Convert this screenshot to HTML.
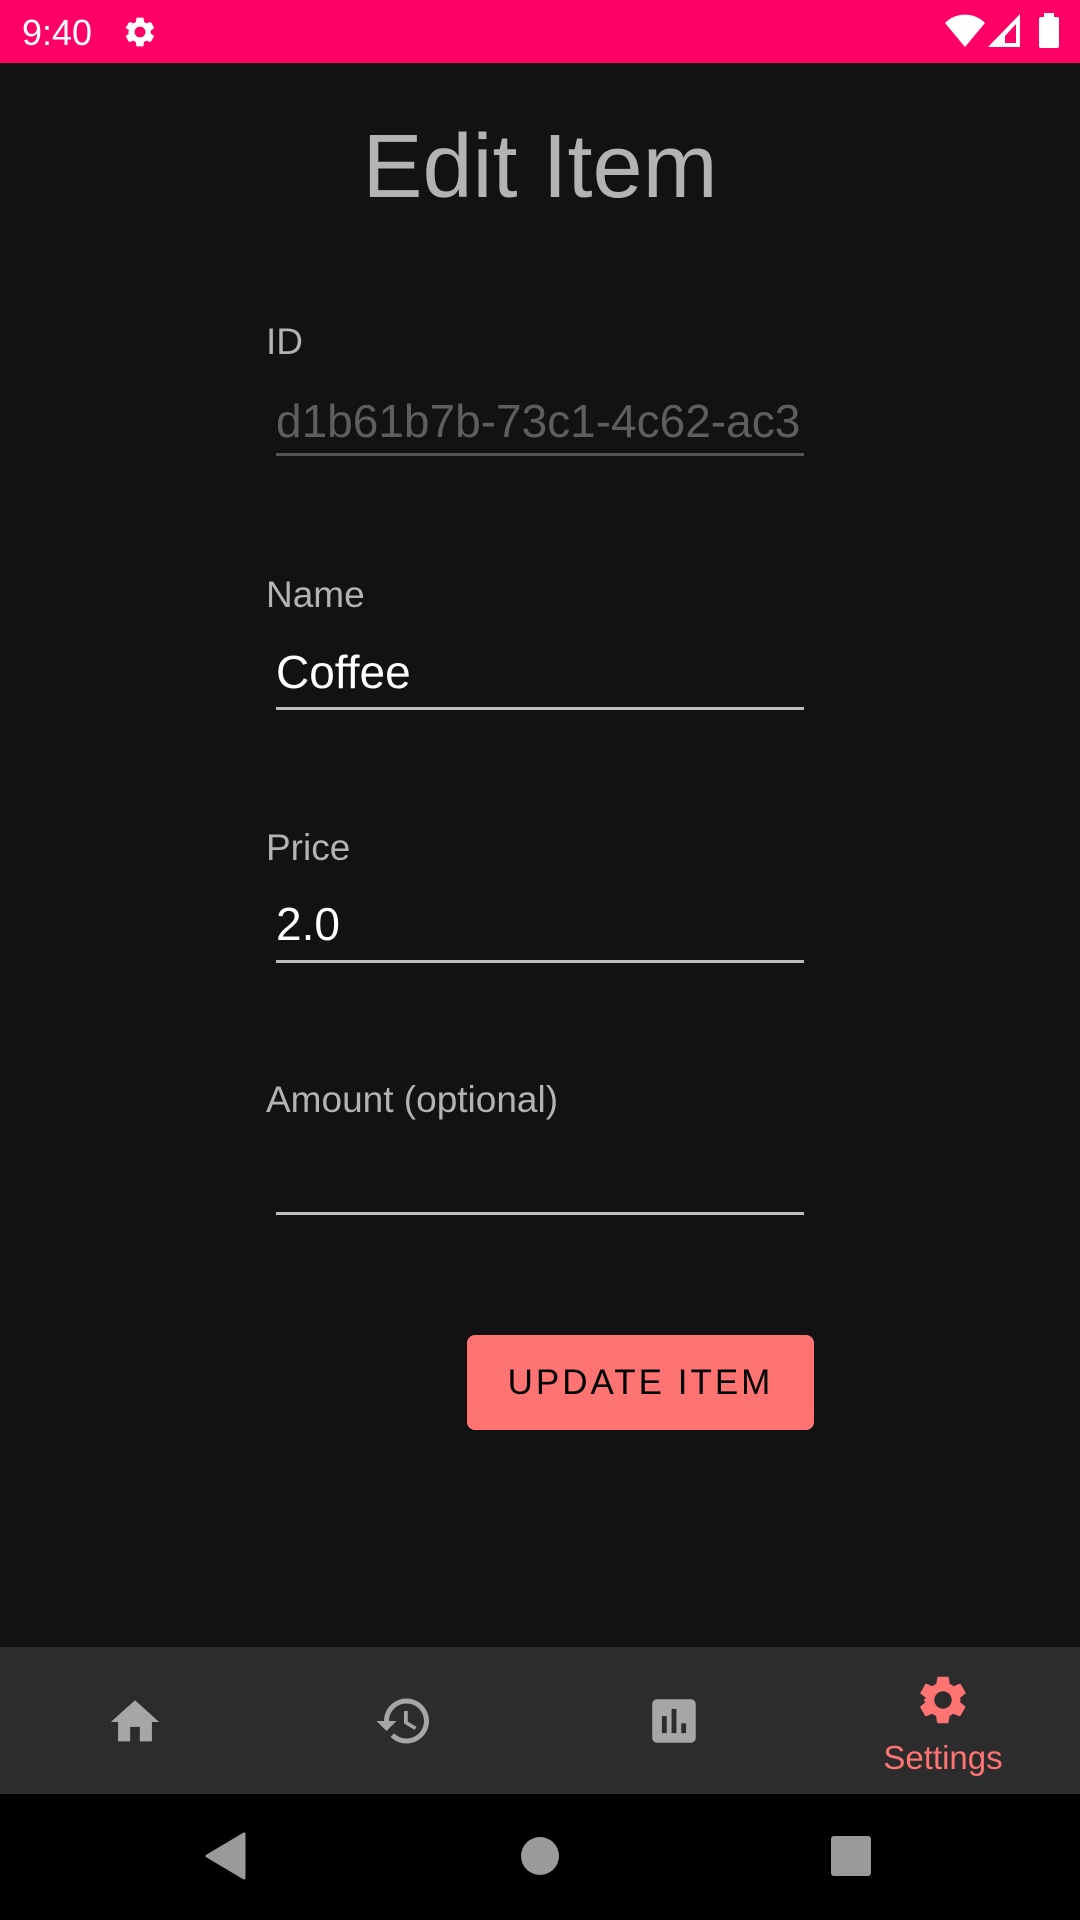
<!DOCTYPE html>
<html><head><meta charset="utf-8"><style>
*{margin:0;padding:0;box-sizing:border-box}
body{width:1080px;height:1920px;background:#121212;position:relative;overflow:hidden;font-family:"Liberation Sans",sans-serif}
.a{position:absolute;line-height:1;white-space:nowrap}
.lab{color:#b3b3b3;font-size:37px;left:266px}
.val{color:#fff;font-size:46px;left:276px}
.line{position:absolute;left:276px;width:528px;height:3px;background:#bdbdbd}
</style></head><body>
<div style="position:absolute;left:0;top:0;width:1080px;height:63px;background:#ff0066"></div>
<div class="a" style="left:22px;top:15px;font-size:36px;color:#fff">9:40</div>
<svg style="position:absolute;left:122px;top:14px" width="36" height="36" viewBox="0 0 24 24"><path fill="#fff" d="M19.14 12.94c.04-.3.06-.61.06-.94 0-.32-.02-.64-.07-.94l2.030-1.58a.49.49 0 0 0 .12-.61l-1.92-3.32a.49.49 0 0 0-.59-.22l-2.39.96c-.5-.38-1.03-.7-1.62-.94l-.36-2.54a.48.48 0 0 0-.48-.41h-3.840c-.24 0-.43.17-.47.41l-.36 2.540c-.59.24-1.13.57-1.62.94l-2.39-.96a.49.49 0 0 0-.59.22L2.74 8.87c-.12.21-.8.47.12.61l2.03 1.58c-.5.3-.8.63-.8.94s.2.64.7.94l-2.03 1.58a.49.49 0 0 0-.12.61l1.92 3.32c.12.22.37.29.59.22l2.39-.96c.5.38 1.03.7 1.62.94l.36 2.54c.5.24.24.41.48.41h3.84c.24 0 .44-.17.47-.41l.36-2.54c.59-.24 1.13-.56 1.62-.94l2.39.96c.22.08.47 0 .59-.22l1.92-3.32c.12-.22.07-.47-.12-.61l-2.01-1.58zM12 15.6A3.6 3.6 0 1 1 12 8.4a3.6 3.6 0 0 1 0 7.2z"/></svg>
<svg style="position:absolute;left:944px;top:14px" width="42" height="34" viewBox="0 0 42 34"><path fill="#fff" d="M21 33 L1 9 A28 28 0 0 1 41 9 Z"/></svg>
<svg style="position:absolute;left:988px;top:14px" width="33" height="33" viewBox="0 0 33 33"><path fill="#fff" d="M32 0 V33 H0 Z M28 10 L17 22 V29 H28 Z" fill-rule="evenodd"/></svg>
<div style="position:absolute;left:1039px;top:17px;width:20px;height:31px;background:#fff;border-radius:2px"></div>
<div style="position:absolute;left:1044px;top:13px;width:10px;height:5px;background:#fff"></div>

<div class="a" style="left:0;width:1080px;text-align:center;top:122px;font-size:90px;color:#b3b3b3">Edit Item</div>

<div class="a lab" style="top:323px">ID</div>
<div class="a" style="left:276px;top:398px;font-size:46px;color:#5e5e5e">d1b61b7b-73c1-4c62-ac3</div>
<div class="line" style="top:453px;background:#555"></div>

<div class="a lab" style="top:576px">Name</div>
<div class="a val" style="top:649px">Coffee</div>
<div class="line" style="top:707px"></div>

<div class="a lab" style="top:829px">Price</div>
<div class="a val" style="top:901px">2.0</div>
<div class="line" style="top:960px"></div>

<div class="a lab" style="top:1081px">Amount (optional)</div>
<div class="line" style="top:1212px"></div>

<div style="position:absolute;left:467px;top:1335px;width:347px;height:95px;background:#ff7373;border-radius:8px;display:flex;align-items:center;justify-content:center;font-size:35px;letter-spacing:3px;color:#000;font-weight:500">UPDATE ITEM</div>

<div style="position:absolute;left:0;top:1647px;width:1080px;height:147px;background:#2c2c2c"></div>
<svg style="position:absolute;left:106px;top:1693px" width="58" height="58" viewBox="0 0 24 24"><path fill="#a6a6a6" d="M10 20v-6h4v6h5v-8h3L12 3 2 12h3v8z"/></svg>
<svg style="position:absolute;left:374px;top:1691px" width="60" height="60" viewBox="0 0 24 24"><path fill="#a6a6a6" d="M13 3a9 9 0 0 0-9 9H1l3.89 3.89.07.14L9 12H6c0-3.87 3.13-7 7-7s7 3.13 7 7-3.13 7-7 7c-1.93 0-3.68-.79-4.94-2.06l-1.42 1.42A8.954 8.954 0 0 0 13 21a9 9 0 0 0 0-18zm-1 5v5l4.28 2.54.72-1.21-3.5-2.08V8H12z"/></svg>
<svg style="position:absolute;left:645px;top:1692px" width="58" height="58" viewBox="0 0 24 24"><path fill="#a6a6a6" d="M19 3H5c-1.1 0-2 .9-2 2v14c0 1.1.9 2 2 2h14c1.1 0 2-.9 2-2V5c0-1.1-.9-2-2-2zM9 17H7v-7h2v7zm4 0h-2V7h2v10zm4 0h-2v-4h2v4z"/></svg>
<svg style="position:absolute;left:914px;top:1671px" width="58" height="58" viewBox="0 0 24 24"><path fill="#ff7373" d="M19.14 12.94c.04-.3.06-.61.06-.94 0-.32-.02-.64-.07-.94l2.03-1.58a.49.49 0 0 0 .12-.61l-1.92-3.32a.49.49 0 0 0-.59-.22l-2.39.96c-.5-.38-1.03-.7-1.62-.94l-.36-2.54a.48.48 0 0 0-.48-.41h-3.84c-.24 0-.43.17-.47.41l-.36 2.54c-.59.24-1.13.57-1.62.94l-2.39-.96a.49.49 0 0 0-.59.22L2.74 8.87c-.12.21-.08.47.12.61l2.03 1.58c-.05.3-.8.63-.8.94s.2.64.7.94l-2.03 1.58a.49.49 0 0 0-.12.61l1.92 3.32c.12.22.37.29.59.22l2.39-.96c.5.38 1.03.7 1.62.94l.36 2.54c.5.24.24.41.48.41h3.84c.24 0 .44-.17.47-.41l.36-2.54c.59-.24 1.13-.56 1.62-.94l2.39.96c.22.08.47 0 .59-.22l1.92-3.32c.12-.22.07-.47-.12-.61l-2.01-1.58zM12 15.6A3.6 3.6 0 1 1 12 8.4a3.6 3.6 0 0 1 0 7.2z"/></svg>
<div class="a" style="left:843px;width:200px;text-align:center;top:1741px;font-size:33px;color:#ff7373">Settings</div>

<div style="position:absolute;left:0;top:1794px;width:1080px;height:126px;background:#000"></div>
<svg style="position:absolute;left:204px;top:1832px" width="42" height="48" viewBox="0 0 42 48"><path fill="#9a9a9a" d="M40 2 V46 L3 24 Z" stroke="#9a9a9a" stroke-width="3" stroke-linejoin="round"/></svg>
<div style="position:absolute;left:521px;top:1837px;width:38px;height:38px;border-radius:50%;background:#9a9a9a"></div>
<div style="position:absolute;left:831px;top:1836px;width:40px;height:40px;border-radius:3px;background:#9a9a9a"></div>
</body></html>
